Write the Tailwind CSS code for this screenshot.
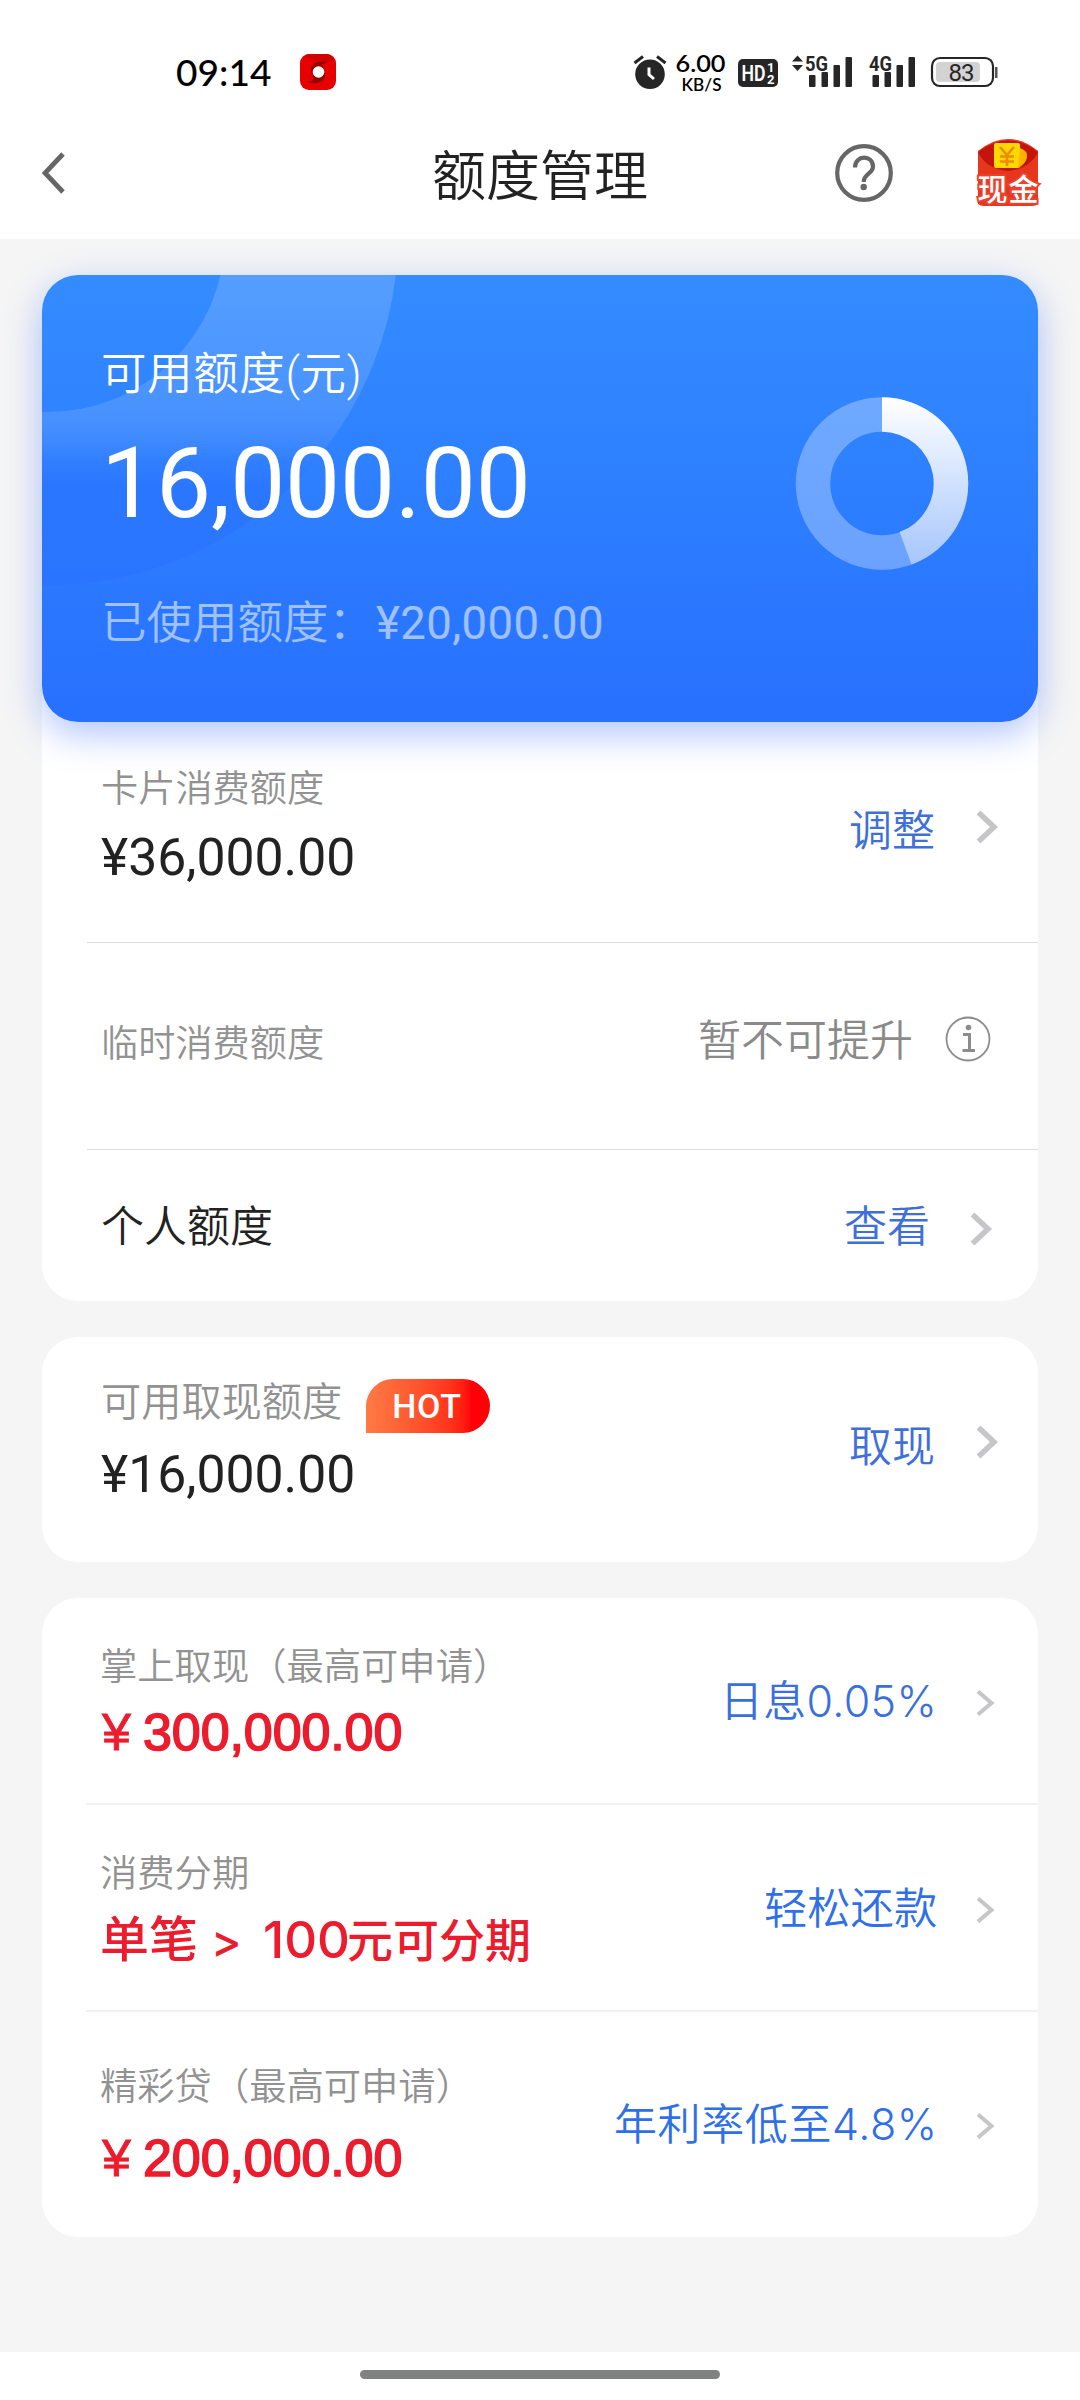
<!DOCTYPE html>
<html lang="zh-CN">
<head>
<meta charset="utf-8">
<title>额度管理</title>
<script src="https://cdn.jsdelivr.net/npm/@tailwindcss/browser@4"></script>
</head>
<body class="w-[1080px] h-[2400px] overflow-hidden bg-[#f5f5f5] flex flex-col font-['Roboto','Noto_Sans_CJK_SC',sans-serif] text-[#222]">

<!-- status bar -->
<div class="h-[100px] shrink-0 bg-white flex items-start pl-[176px] pr-[82px] pt-[42px]">
  <div class="mt-[10px] h-10 w-[98px] font-['Lato',sans-serif] font-medium text-[37px] leading-[40px] tracking-[0.1px] text-black whitespace-nowrap">09:14</div>
  <svg class="ml-[26px] mt-[12px]" width="36" height="36" viewBox="0 0 36 36">
    <rect width="36" height="36" rx="9" fill="#e60000"/>
    <path d="M4 3Q14 3 18 10Q25 10 34 5Q30 0 27 0H9Q6 0 4 3Z" fill="#d00000"/>
    <path d="M12 20C8 10 16 5 30 8C24 8 22 10 23 15Z" fill="#9b0000"/>
    <path d="M24 17C28 26 20 32 6 28C12 28 14 26 13 21Z" fill="#9b0000"/>
    <circle cx="18.500" cy="18" r="5.800" fill="#fff"/>
  </svg>
  <div class="flex-1"></div>
  <svg width="366" height="58" viewBox="632 42 366 58" font-family="Roboto, sans-serif">
    <!-- alarm -->
    <circle cx="650" cy="74.300" r="14.800" fill="#262626"/>
    <path d="M634.500 63l8.500-6.500M665.500 63l-8.500-6.500" stroke="#262626" stroke-width="3"/>
    <path d="M649 67.500v7l5 4.500" fill="none" stroke="#fff" stroke-width="3"/>
    <!-- speed -->
    <text x="675.500" y="71.500" font-family="Lato, sans-serif" font-weight="600" font-size="23.500" textLength="50" lengthAdjust="spacingAndGlyphs" fill="#000">6.00</text>
    <text x="681.500" y="90.500" font-family="Lato, sans-serif" font-weight="600" font-size="17.500" textLength="40" lengthAdjust="spacingAndGlyphs" fill="#000">KB/S</text>
    <!-- HD -->
    <rect x="738" y="59" width="40" height="28" rx="5" fill="#262626"/>
    <text x="741.500" y="81" font-size="22" font-weight="600" textLength="24" lengthAdjust="spacingAndGlyphs" fill="#fff">HD</text>
    <text x="767" y="72" font-size="13" font-weight="700" fill="#fff">1</text>
    <text x="767" y="84" font-size="13" font-weight="700" fill="#fff">2</text>
    <!-- 5G -->
    <path d="M792 61.500l5.500-6 5.500 6zM792 65h11l-5.500 6z" fill="#262626"/>
    <text x="805" y="70.500" font-size="21" font-weight="700" textLength="23" lengthAdjust="spacingAndGlyphs" fill="#262626">5G</text>
    <g fill="#262626">
      <rect x="809" y="75" width="6.500" height="12" rx="1"/><rect x="821.500" y="72" width="6.500" height="15" rx="1"/><rect x="833.500" y="65" width="6.500" height="22" rx="1"/><rect x="845.500" y="57" width="6.500" height="30" rx="1"/>
      <rect x="872.500" y="75" width="6.500" height="12" rx="1"/><rect x="884.500" y="72" width="6.500" height="15" rx="1"/><rect x="896.500" y="65" width="6.500" height="22" rx="1"/><rect x="908.500" y="57" width="6.500" height="30" rx="1"/>
    </g>
    <text x="869" y="70.500" font-size="21" font-weight="700" textLength="23" lengthAdjust="spacingAndGlyphs" fill="#262626">4G</text>
    <!-- battery -->
    <rect x="932" y="58" width="61" height="28" rx="8" fill="none" stroke="#262626" stroke-width="2.200"/>
    <rect x="936" y="62" width="44" height="20" rx="4" fill="#d3d3d3"/>
    <rect x="995" y="67" width="2.500" height="11" fill="#555"/>
    <text x="948.500" y="81" font-size="24" textLength="26" fill="#262626">83</text>
  </svg>
</div>

<!-- title bar -->
<header class="h-[139px] shrink-0 bg-white flex items-start">
  <svg class="ml-[42px] mt-[52px]" width="24" height="42" viewBox="0 0 24 42"><path d="M21 2L3 21L21 40" fill="none" stroke="#666" stroke-width="4.800"/></svg>
  <h1 class="ml-[366px] mt-[42px] w-[219px] text-[54px] leading-[72px] font-[350] text-[#222] whitespace-nowrap">额度管理</h1>
  <svg class="ml-[183px] mt-[44px]" width="60" height="60" viewBox="0 0 60 60">
    <circle cx="30" cy="29" r="26.800" fill="none" stroke="#666" stroke-width="4.200"/>
    <path d="M21 23.500C21 10.500 39 10.500 39 22.500C39 30 29.700 29.500 29.700 38" fill="none" stroke="#666" stroke-width="4.200"/>
    <circle cx="29.700" cy="43" r="3.200" fill="#666"/>
  </svg>
  <svg class="ml-[78px] mt-[37px]" width="72" height="72" viewBox="0 0 72 72" font-family="'Noto Sans CJK SC', sans-serif">
    <path d="M6 14Q36 -10 66 14V67Q64 69 60 69H12Q8 69 6 67Z" fill="#e6361d"/>
    <path d="M6 15Q36 -8 66 15Q58 32 36 34Q14 32 6 15Z" fill="#c4150c"/>
    <rect x="22" y="6" width="26" height="25" rx="2" fill="#ffd900"/>
    <path d="M48 11Q56 14 55 20Q54 27 46 31Z" fill="#ffb400"/>
    <path d="M28 10l7 8 7-8M35 18v11M28 19.500h14M28 24.500h14" fill="none" stroke="#f08a00" stroke-width="2.600"/>
    <text x="5.500" y="62.500" font-size="30" font-weight="500" textLength="61" fill="#fff" stroke="#e8432c" stroke-width="4" paint-order="stroke">现金</text>
  </svg>
</header>

<main class="h-[2113px] shrink-0 flex flex-col px-[42px] pt-9">

  <section class="bg-white rounded-[36px] h-[1026px]">
    <!-- available limit -->
    <div class="relative h-[447px] rounded-[36px] bg-linear-to-b from-[#348cff] to-[#2870ff] shadow-[0_12px_36px_rgba(60,110,255,0.4)] flex">
      <svg class="absolute left-0 top-0 rounded-[36px]" width="400" height="447" viewBox="42 275 400 447">
        <defs><linearGradient id="ring" gradientUnits="userSpaceOnUse" x1="0" y1="275" x2="0" y2="585">
          <stop offset="0" stop-color="#fff" stop-opacity=".16"/>
          <stop offset=".42" stop-color="#fff" stop-opacity=".12"/>
          <stop offset=".6" stop-color="#3a78ff" stop-opacity=".22"/>
          <stop offset=".68" stop-color="#2468ff" stop-opacity=".36"/>
          <stop offset="1" stop-color="#2468ff" stop-opacity=".24"/>
        </linearGradient></defs>
        <circle cx="48" cy="235" r="263.500" fill="none" stroke="url(#ring)" stroke-width="173"/>
      </svg>
      <div class="relative pl-[59px] pt-[70px] w-[700px] text-white whitespace-nowrap">
        <div class="h-[60px] text-[45.500px] leading-[60px] font-[350] tracking-[0.6px]">可用额度(元)</div>
        <div class="h-[110px] mt-[24px] text-[98px] leading-[110px] tracking-[-0.1px]">16,000.00</div>
        <div class="h-[60px] mt-[55px] flex text-[45.500px] leading-[60px] font-[350] text-white/55">
          <span class="w-[275px]">已使用额度：</span><span class="font-normal tracking-[0.4px]">¥20,000.00</span>
        </div>
      </div>
      <svg class="relative ml-[52px] mt-[120px]" width="176" height="176" viewBox="0 0 176 176">
        <defs><linearGradient id="arc" x1="0" y1="0" x2="0" y2="1"><stop offset="0" stop-color="#fff"/><stop offset="1" stop-color="#a6c6fd"/></linearGradient></defs>
        <circle cx="88" cy="88.500" r="69" fill="none" stroke="#fff" stroke-opacity=".3" stroke-width="34.500"/>
        <path d="M88 2.300A86.200 86.200 0 0 1 117.500 169.500L105.700 137.100A51.700 51.700 0 0 0 88 36.800Z" fill="url(#arc)"/>
      </svg>
    </div>

    <div class="h-[221px] ml-[45px] pl-[14px] flex border-b border-[#dedede] whitespace-nowrap">
      <div class="flex-1 pt-[43px]">
        <div class="text-[37.200px] leading-[48px] font-[350] text-[#929292]">卡片消费额度</div>
        <div class="mt-[15px] text-[51.700px] leading-[60px]">¥36,000.00</div>
      </div>
      <div class="mt-[79px] w-[127px] text-[43px] leading-[60px] font-[350] text-[#3f6fd9]">调整</div>
      <svg class="mt-[88px] mr-[38px]" width="24" height="34" viewBox="0 0 24 34"><path d="M2.500 2.500L18 17L2.500 31.500" fill="none" stroke="#c6c6c8" stroke-width="5.500"/></svg>
    </div>

    <div class="h-[207px] ml-[45px] pl-[14px] flex border-b border-[#dedede] whitespace-nowrap">
      <div class="flex-1 pt-[77px] text-[37.200px] leading-[48px] font-[350] text-[#929292]">临时消费额度</div>
      <div class="mt-[68px] w-[247px] text-[43px] leading-[60px] font-[350] text-[#8a8a8a]">暂不可提升</div>
      <svg class="mt-[73px] mr-[47px]" width="46" height="46" viewBox="0 0 46 46">
        <circle cx="23" cy="23" r="21.500" fill="none" stroke="#8c8c8c" stroke-width="1.800"/>
        <circle cx="23.500" cy="11.500" r="2.800" fill="#8c8c8c"/>
        <path d="M18 18.500h6.500v16M17.500 34.500h12.500" fill="none" stroke="#8c8c8c" stroke-width="3"/>
      </svg>
    </div>

    <div class="h-[151px] ml-[45px] pl-[14px] flex whitespace-nowrap">
      <div class="flex-1 pt-[47px] text-[43px] leading-[60px] font-[350]">个人额度</div>
      <div class="mt-[47px] w-[126px] text-[43px] leading-[60px] font-[350] text-[#3f6fd9]">查看</div>
      <svg class="mt-[62px] mr-[44px]" width="24" height="34" viewBox="0 0 24 34"><path d="M2.500 2.500L18 17L2.500 31.500" fill="none" stroke="#c6c6c8" stroke-width="5.500"/></svg>
    </div>
  </section>

  <section class="mt-[36px] bg-white rounded-[36px] h-[225px] pl-[59px] flex whitespace-nowrap">
    <div class="flex-1 pt-[38px]">
      <div class="flex">
        <div class="w-[265px] text-[40.200px] leading-[56px] font-[350] text-[#929292]">可用取现额度</div>
        <div class="mt-[4px] w-[124px] h-[54px] rounded-[27px] rounded-bl-none bg-linear-to-r from-[#ff7a45] to-[#ff0008] to-85% text-white text-[34px] leading-[54px] font-medium tracking-[0.6px] text-center pr-[2px]">HOT</div>
      </div>
      <div class="mt-[12px] text-[51.700px] leading-[60px]">¥16,000.00</div>
    </div>
    <div class="mt-[80px] w-[127px] text-[43px] leading-[60px] font-[350] text-[#3f6fd9]">取现</div>
    <svg class="mt-[88px] mr-[38px]" width="24" height="34" viewBox="0 0 24 34"><path d="M2.500 2.500L18 17L2.500 31.500" fill="none" stroke="#c6c6c8" stroke-width="5.500"/></svg>
  </section>

  <section class="mt-[36px] bg-white rounded-[36px] h-[639px] whitespace-nowrap">
    <div class="h-[207px] ml-[44px] pl-[14px] flex border-b-2 border-[#f2f2f2]">
      <div class="flex-1 pt-[45px]">
        <div class="text-[37.300px] leading-[48px] font-[350] text-[#929292]">掌上取现（最高可申请）</div>
        <div class="mt-[11px] pl-[2px] flex font-['Liberation_Sans',sans-serif] text-[52px] leading-[60px] text-[#eb1c2d]"><span class="w-[41px] [-webkit-text-stroke:0.8px_#eb1c2d]">¥</span><span class="tracking-[-0.1px] [-webkit-text-stroke:1.6px_#eb1c2d]">300,000.00</span></div>
      </div>
      <div class="mt-[73px] w-[256px] font-['Inter','Noto_Sans_CJK_SC',sans-serif] text-[43px] leading-[60px] font-[350] tracking-[0.3px] text-[#3a6fdc]">日息0.05%</div>
      <svg class="mt-[92px] mr-[42px]" width="20" height="26" viewBox="0 0 20 26"><path d="M2 1.500L15.500 13L2 24.500" fill="none" stroke="#c6c6c8" stroke-width="4"/></svg>
    </div>

    <div class="h-[207px] ml-[44px] pl-[14px] flex border-b-2 border-[#f2f2f2]">
      <div class="flex-1 pt-[45px]">
        <div class="text-[37.300px] leading-[48px] font-[350] text-[#929292]">消费分期</div>
        <div class="mt-[12px] h-[60px] flex font-['Inter','Noto_Sans_CJK_SC',sans-serif] text-[#eb1c2d] leading-[60px] font-medium"><span class="w-[111px] text-[49px]">单笔</span><span class="w-[52px] text-[46px]">&gt;</span><span class="w-[84px] text-[51px]">100</span><span class="text-[46px]">元可分期</span></div>
      </div>
      <div class="mt-[75px] w-[212px] text-[43.300px] leading-[60px] font-[350] text-[#2f6fe8]">轻松还款</div>
      <svg class="mt-[92px] mr-[42px]" width="20" height="26" viewBox="0 0 20 26"><path d="M2 1.500L15.500 13L2 24.500" fill="none" stroke="#c6c6c8" stroke-width="4"/></svg>
    </div>

    <div class="h-[225px] ml-[44px] pl-[14px] flex">
      <div class="flex-1 pt-[51px]">
        <div class="text-[37.300px] leading-[48px] font-[350] text-[#929292]">精彩贷（最高可申请）</div>
        <div class="mt-[17px] pl-[2px] flex font-['Liberation_Sans',sans-serif] text-[52px] leading-[60px] text-[#eb1c2d]"><span class="w-[41px] [-webkit-text-stroke:0.8px_#eb1c2d]">¥</span><span class="tracking-[-0.1px] [-webkit-text-stroke:1.6px_#eb1c2d]">200,000.00</span></div>
      </div>
      <div class="mt-[82px] w-[362px] font-['Inter','Noto_Sans_CJK_SC',sans-serif] text-[43px] leading-[60px] font-[350] tracking-[0.6px] text-[#2f6fe8]">年利率低至4.8%</div>
      <svg class="mt-[101px] mr-[42px]" width="20" height="26" viewBox="0 0 20 26"><path d="M2 1.500L15.500 13L2 24.500" fill="none" stroke="#c6c6c8" stroke-width="4"/></svg>
    </div>
  </section>
</main>

<!-- gesture bar -->
<footer class="h-12 shrink-0 bg-white flex justify-center pt-[18px]">
  <div class="w-[360px] h-[9px] rounded-full bg-[#808281]"></div>
</footer>
</body>
</html>
